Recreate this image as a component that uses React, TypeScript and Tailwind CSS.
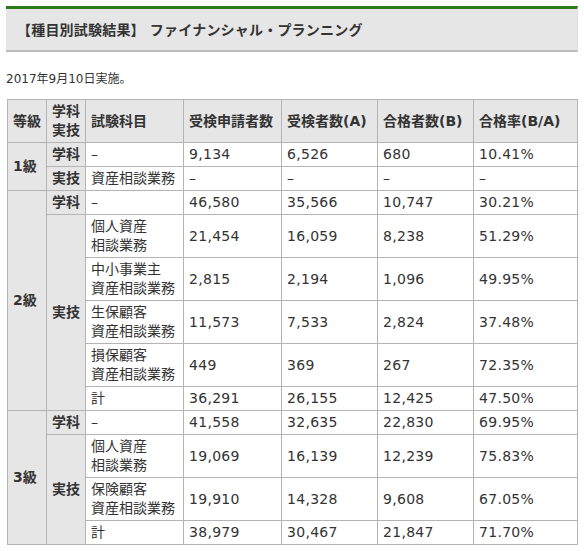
const font = { fontFamily: '"DejaVu Sans", "Noto Sans CJK JP", sans-serif' };

type Row = {
  grade?: { label: string; span: number };
  kind?: { label: string; span: number };
  subject: string[];
  values: string[];
};

const rows: Row[] = [
  { grade: { label: "1級", span: 2 }, kind: { label: "学科", span: 1 }, subject: ["–"], values: ["9,134", "6,526", "680", "10.41%"] },
  { kind: { label: "実技", span: 1 }, subject: ["資産相談業務"], values: ["–", "–", "–", "–"] },
  { grade: { label: "2級", span: 6 }, kind: { label: "学科", span: 1 }, subject: ["–"], values: ["46,580", "35,566", "10,747", "30.21%"] },
  { kind: { label: "実技", span: 5 }, subject: ["個人資産", "相談業務"], values: ["21,454", "16,059", "8,238", "51.29%"] },
  { subject: ["中小事業主", "資産相談業務"], values: ["2,815", "2,194", "1,096", "49.95%"] },
  { subject: ["生保顧客", "資産相談業務"], values: ["11,573", "7,533", "2,824", "37.48%"] },
  { subject: ["損保顧客", "資産相談業務"], values: ["449", "369", "267", "72.35%"] },
  { subject: ["計"], values: ["36,291", "26,155", "12,425", "47.50%"] },
  { grade: { label: "3級", span: 4 }, kind: { label: "学科", span: 1 }, subject: ["–"], values: ["41,558", "32,635", "22,830", "69.95%"] },
  { kind: { label: "実技", span: 3 }, subject: ["個人資産", "相談業務"], values: ["19,069", "16,139", "12,239", "75.83%"] },
  { subject: ["保険顧客", "資産相談業務"], values: ["19,910", "14,328", "9,608", "67.05%"] },
  { subject: ["計"], values: ["38,979", "30,467", "21,847", "71.70%"] },
];

const cell = "border border-[#b4b4b4] px-[5px] py-[2px] text-left font-normal whitespace-nowrap";
const grayCell = "border border-[#b4b4b4] px-[5px] py-[2px] text-left font-bold bg-[#e6e6e6] align-middle whitespace-nowrap";

export default function App() {
  return (
    <div className="w-[584px] h-[551px] bg-white text-[#333] pt-[6px] pl-[6px]" style={font}>
      <div className="w-[572px]">
        <div className="border-t-[3px] border-[#2b7a1a] border-b-2 border-b-[#bcbcbc] border-r border-r-[#dcdcdc] bg-[#e6e6e6] h-[46px] flex items-center pl-[11px]">
          <h2 className="text-[14px] font-bold leading-[20px] tracking-[0.2px]">【種目別試験結果】 ファイナンシャル・プランニング</h2>
        </div>
        <p className="text-[12px] leading-[18px] mt-[18px]">2017年9月10日実施。</p>
        <table className="ml-px mt-[11px] border-collapse text-[14px] leading-[19px] table-fixed w-[570px]">
          <colgroup>
            <col className="w-[39px]" />
            <col className="w-[39px]" />
            <col className="w-[98px]" />
            <col className="w-[98px]" />
            <col className="w-[96px]" />
            <col className="w-[96px]" />
            <col className="w-[104px]" />
          </colgroup>
          <thead>
            <tr>
              <th className={grayCell}>等級</th>
              <th className={grayCell}>学科<br />実技</th>
              <th className={grayCell}>試験科目</th>
              <th className={grayCell}>受検申請者数</th>
              <th className={grayCell}>受検者数(A)</th>
              <th className={grayCell}>合格者数(B)</th>
              <th className={grayCell}>合格率(B/A)</th>
            </tr>
          </thead>
          <tbody>
            {rows.map((r, i) => (
              <tr key={i}>
                {r.grade && (
                  <td rowSpan={r.grade.span} className={grayCell}>{r.grade.label}</td>
                )}
                {r.kind && (
                  <td rowSpan={r.kind.span} className={grayCell}>{r.kind.label}</td>
                )}
                <td className={cell}>
                  {r.subject.map((s, j) => (
                    <div key={j}>{s}</div>
                  ))}
                </td>
                {r.values.map((v, j) => (
                  <td key={j} className={cell + " align-middle tracking-[0.3px]"}>{v}</td>
                ))}
              </tr>
            ))}
          </tbody>
        </table>
      </div>
    </div>
  );
}
